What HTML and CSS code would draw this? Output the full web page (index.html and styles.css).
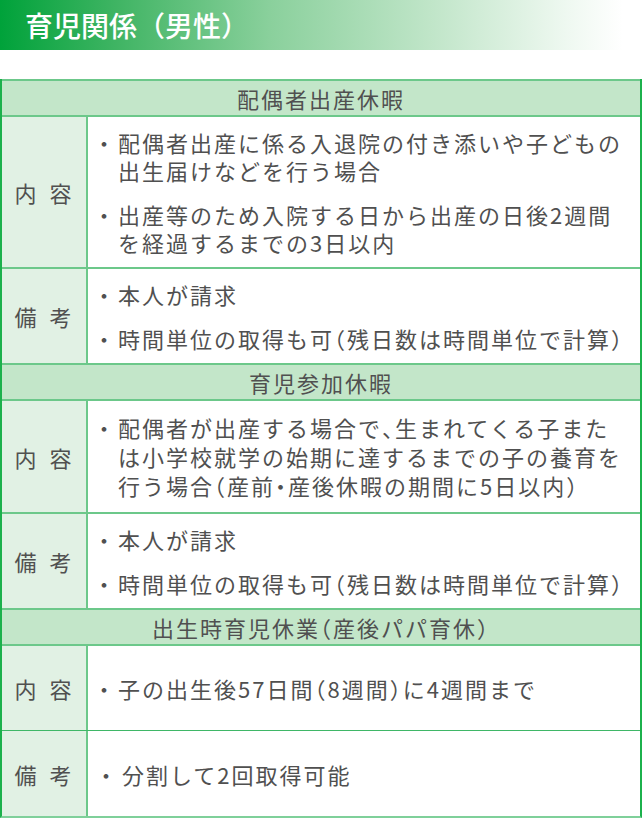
FILE: index.html
```html
<!DOCTYPE html>
<html lang="ja">
<head>
<meta charset="utf-8">
<link rel="stylesheet" href="styles.css">
</head>
<body>
<h1 class="title">育児関係（男性）</h1>
<div class="table">
  <div class="head">配偶者出産休暇</div>
  <div class="row">
    <div class="label">内&nbsp;容</div>
    <div class="cell">
      <div class="item"><span class="dot">・</span><span class="txt">配偶者出産に係る入退院の付き添いや子どもの<br>出生届けなどを行う場合</span></div>
      <div class="item"><span class="dot">・</span><span class="txt">出産等のため入院する日から出産の日後2週間<br>を経過するまでの3日以内</span></div>
    </div>
  </div>
  <div class="row">
    <div class="label">備&nbsp;考</div>
    <div class="cell">
      <div class="item"><span class="dot">・</span><span class="txt">本人が請求</span></div>
      <div class="item"><span class="dot">・</span><span class="txt">時間単位の取得も可<span class="h">（</span>残日数は時間単位で計算<span class="h">）</span></span></div>
    </div>
  </div>
  <div class="head">育児参加休暇</div>
  <div class="row">
    <div class="label">内&nbsp;容</div>
    <div class="cell cell-tall">
      <div class="item"><span class="dot">・</span><span class="txt">配偶者が出産する場合で<span class="h">、</span>生まれてくる子また<br>は小学校就学の始期に達するまでの子の養育を<br>行う場合<span class="h">（</span>産前<span class="h">・</span>産後休暇の期間に5日以内<span class="h">）</span></span></div>
    </div>
  </div>
  <div class="row">
    <div class="label">備&nbsp;考</div>
    <div class="cell">
      <div class="item"><span class="dot">・</span><span class="txt">本人が請求</span></div>
      <div class="item"><span class="dot">・</span><span class="txt">時間単位の取得も可<span class="h">（</span>残日数は時間単位で計算<span class="h">）</span></span></div>
    </div>
  </div>
  <div class="head">出生時育児休業<span class="h">（</span>産後パパ育休<span class="h">）</span></div>
  <div class="row row-single">
    <div class="label">内&nbsp;容</div>
    <div class="cell">
      <div class="item"><span class="dot">・</span><span class="txt">子の出生後57日間<span class="h">（</span>8週間<span class="h">）</span>に4週間まで</span></div>
    </div>
  </div>
  <div class="row row-single row-last">
    <div class="label">備&nbsp;考</div>
    <div class="cell cell-shift">
      <div class="item"><span class="dot">・</span><span class="txt">分割して2回取得可能</span></div>
    </div>
  </div>
</div>
</body>
</html>
```
FILE: styles.css
```css
html, body {
  margin: 0;
  padding: 0;
  background: #ffffff;
}
body {
  width: 642px;
  font-family: "Noto Sans CJK JP", "Noto Sans", sans-serif;
  color: #505050;
}
.title {
  margin: 0;
  height: 50px;
  line-height: 50px;
  padding-left: 25px;
  font-size: 28px;
  font-weight: 500;
  color: #ffffff;
  background: linear-gradient(to right, #00a23a 0%, #3fb463 18%, #8ad09c 42%, #c2e6ca 68%, #eef8f0 88%, #ffffff 97%);
}
.table {
  margin-top: 29px;
  border-left: 2px solid #1cb14c;
  border-right: 2px solid #1cb14c;
  border-bottom: 2px solid #7fd09a;
  font-size: 22px;
  letter-spacing: 2px;
}
.head {
  border-top: 2px solid #6cc88a;
  background: #c3e6c9;
  line-height: 34px;
  text-align: center;
}
.row {
  display: flex;
  border-top: 2px solid #6cc88a;
}
.label {
  flex: 0 0 86px;
  background: #e1f1e4;
  border-right: 2px solid #6cc88a;
  display: flex;
  align-items: center;
  justify-content: center;
  letter-spacing: 4px;
  padding-left: 2px;
  box-sizing: border-box;
}
.cell {
  flex: 1;
  display: flex;
  flex-direction: column;
  justify-content: center;
  gap: 16px;
  padding: 11px 0 11px 5px;
  line-height: 28px;
}
.cell-tall {
  line-height: 29px;
  padding: 12px 0 12px 5px;
}
.cell-shift {
  padding-left: 7px;
}
.cell-shift .dot {
  flex-basis: 27px;
}
.item {
  display: flex;
}
.dot {
  flex: 0 0 25px;
  letter-spacing: 0;
}
.txt {
  flex: 1;
  white-space: nowrap;
}
.h {
  font-feature-settings: "halt";
}
.row-single {
  min-height: 84px;
}
.row-last {
  border-top: 1px solid #3fb767;
  min-height: 85px;
}
```
